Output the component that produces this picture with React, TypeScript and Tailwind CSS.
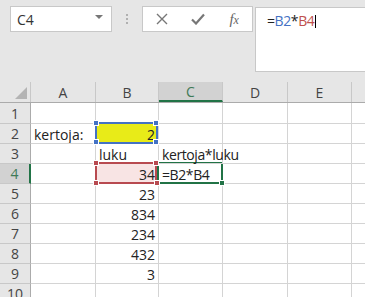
import React from "react";

const font = { fontFamily: '"Open Sans", "Noto Sans", sans-serif' };

const colW = [31, 65, 63, 64, 65, 64, 13];
const colNames = ["A", "B", "C", "D", "E", ""];

type Cell = { text?: string; align?: "left" | "right"; bg?: string; tight?: boolean; overflow?: boolean };

const rows: Record<number, Record<number, Cell>> = {
  2: { 1: { text: "kertoja:", align: "left" }, 2: { text: "2", align: "right", bg: "bg-[#e8eb18]" } },
  3: { 2: { text: "luku", align: "left" }, 3: { text: "kertoja*luku", align: "left", overflow: true, tight: true } },
  4: { 2: { text: "34", align: "right", bg: "bg-[#f8e4e4]" }, 3: { text: "=B2*B4", align: "left", tight: true } },
  5: { 2: { text: "23", align: "right" } },
  6: { 2: { text: "834", align: "right" } },
  7: { 2: { text: "234", align: "right" } },
  8: { 2: { text: "432", align: "right" } },
  9: { 2: { text: "3", align: "right" } },
};

function Handle({ x, y, color }: { x: number; y: number; color: string }) {
  return (
    <div
      className="absolute w-[6px] h-[6px] border border-white"
      style={{ left: x - 3, top: y - 3, backgroundColor: color }}
    />
  );
}

export default function App() {
  const rowNums = [1, 2, 3, 4, 5, 6, 7, 8, 9, 10];
  return (
    <div className="relative w-[365px] h-[297px] overflow-hidden bg-white text-[#222]" style={font}>
      {/* toolbar */}
      <div className="h-[82px] bg-[#e6e6e6] flex items-start pt-[6px]">
        <div className="ml-[10px] w-[102px] h-[26px] bg-white border border-[#c8c8c8] flex items-center justify-between pl-[6px] pr-[8px]">
          <span className="text-[14px] text-[#333]">C4</span>
          <svg width="8" height="5" viewBox="0 0 8 5" className="mb-[3px]">
            <path d="M0 0 L8 0 L4 4 Z" fill="#777" />
          </svg>
        </div>
        <div className="w-[30px] h-[26px] flex flex-col items-center justify-center gap-[2px]">
          <div className="w-[2px] h-[2px] bg-[#b0b0b0]" />
          <div className="w-[2px] h-[2px] bg-[#b0b0b0]" />
          <div className="w-[2px] h-[2px] bg-[#b0b0b0]" />
        </div>
        <div className="w-[111px] h-[26px] bg-white border border-[#c8c8c8] flex items-center">
          <div className="w-[38px] flex justify-center">
            <svg width="12" height="12" viewBox="0 0 12 12">
              <path d="M1 1 L11 11 M11 1 L1 11" stroke="#777" strokeWidth="1.4" />
            </svg>
          </div>
          <div className="w-[36px] flex justify-center">
            <svg width="14" height="12" viewBox="0 0 14 12">
              <path d="M1 6.5 L5 10.5 L13 1.5" stroke="#777" strokeWidth="2.2" fill="none" />
            </svg>
          </div>
          <div className="w-[36px] flex justify-center">
            <span className="text-[15px] italic text-[#666] leading-none" style={{ fontFamily: '"Liberation Serif", serif' }}>
              f<span className="text-[12px]">x</span>
            </span>
          </div>
        </div>
        <div className="ml-[2px] flex-1 h-[65px] mt-[1px] bg-white border border-r-0 border-[#c8c8c8] pl-[11px] pt-[3px] flex items-start">
          <span className="text-[14px] tracking-[-0.4px] leading-[20px]">
            =<span className="text-[#4472c4]">B2</span>*<span className="text-[#c0504d]">B4</span>
          </span>
          <span className="ml-[1px] mt-[4px] w-[1px] h-[13px] bg-black" />
        </div>
      </div>

      {/* column header */}
      <div className="flex h-[21px] bg-[#e6e6e6] border-b border-[#ababab]">
        <div className="relative h-full border-r border-[#c8c8c8]" style={{ width: colW[0] }}>
          <svg className="absolute right-[3px] bottom-[3px]" width="12" height="12" viewBox="0 0 12 12">
            <path d="M12 0 L12 12 L0 12 Z" fill="#b4b4b4" />
          </svg>
        </div>
        {colNames.map((n, i) => (
          <div
            key={i}
            className={
              "h-full flex items-center justify-center text-[14px] " +
              (i === 5 ? "" : "border-r border-[#c8c8c8] ") +
              (n === "C" ? "bg-[#d2d2d2] text-[#3f7a57] border-b-2 border-b-[#217346] " : "text-[#444] ")
            }
            style={{ width: colW[i + 1] }}
          >
            {n}
          </div>
        ))}
      </div>

      {/* rows */}
      {rowNums.map((r) => (
        <div key={r} className={"flex " + (r === 1 ? "h-[21px]" : "h-[20px]")}>
          <div
            className={
              "h-full flex items-center justify-center text-[14px] border-b border-[#c8c8c8] " +
              (r === 4
                ? "bg-[#d2d2d2] text-[#3f7a57] border-r-2 border-r-[#217346]"
                : "bg-[#e6e6e6] text-[#444] border-r border-r-[#ababab]")
            }
            style={{ width: colW[0] }}
          >
            {r}
          </div>
          {colNames.map((_, i) => {
            const c = rows[r]?.[i + 1];
            return (
              <div
                key={i}
                className={
                  "relative h-full flex items-center pt-[1px] text-[14px] border-b border-[#d4d4d4] " +
                  (i === 5 ? "" : "border-r ") +
                  (c?.bg ?? "") +
                  (c?.align === "right" ? " justify-end pr-[3px]" : " justify-start pl-[3px]") +
                  (c?.overflow ? " overflow-visible z-10 whitespace-nowrap" : " overflow-hidden")
                }
                style={{ width: colW[i + 1] }}
              >
                {c?.text && (
                  <span className={"whitespace-nowrap " + (c.tight ? "tracking-[-0.4px]" : "")}>{c.text}</span>
                )}
              </div>
            );
          })}
        </div>
      ))}

      {/* reference and selection borders */}
      <div className="absolute left-[95px] top-[122px] w-[63px] h-[22px] border-2 border-[#4472c4]" />
      <Handle x={96} y={123} color="#4472c4" />
      <Handle x={156} y={123} color="#4472c4" />
      <Handle x={96} y={142} color="#4472c4" />
      <Handle x={156} y={142} color="#4472c4" />

      <div className="absolute left-[95px] top-[162px] w-[62px] h-[22px] border-2 border-[#b84a50]" />
      <div className="absolute left-[157px] top-[162px] w-[66px] h-[22px] border-2 border-[#217346]" />
      <Handle x={96} y={163} color="#b84a50" />
      <Handle x={156} y={163} color="#b84a50" />
      <Handle x={96} y={183} color="#b84a50" />
      <Handle x={157} y={183} color="#b84a50" />
      <Handle x={222} y={183} color="#217346" />
    </div>
  );
}
